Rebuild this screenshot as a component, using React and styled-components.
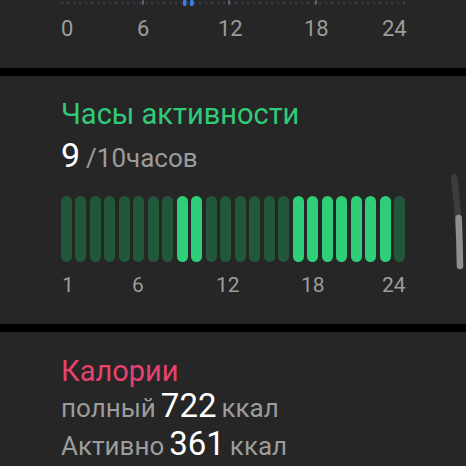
import styled, { createGlobalStyle } from 'styled-components';

const GlobalStyle = createGlobalStyle`
  *, *::before, *::after {
    box-sizing: border-box;
  }
  html, body {
    margin: 0;
    padding: 0;
    background: #000;
    width: 466px;
    height: 466px;
    overflow: hidden;
    font-family: Roboto, "Noto Sans", sans-serif;
  }
`;

const Screen = styled.div`
  position: relative;
  width: 466px;
  height: 466px;
  display: flex;
  flex-direction: column;
  gap: 8px;
  overflow: hidden;
`;

const Card = styled.section`
  flex: none;
  height: ${(p) => p.$height}px;
  background: #262626;
  padding: ${(p) => p.$top || 0}px 61px 0 61px;
  display: flex;
  flex-direction: column;
`;

const Strip = styled.svg`
  display: block;
  width: 344px;
  height: 6px;
`;

const Axis = styled.div`
  position: relative;
  width: 344px;
  height: ${(p) => p.$line}px;
  margin-top: ${(p) => p.$gap}px;
`;

const Tick = styled.span`
  position: absolute;
  top: 0;
  font-size: ${(p) => p.$size}px;
  line-height: ${(p) => p.$line}px;
  color: #9c9c9c;
`;

const Title = styled.h2`
  margin: 0;
  font-size: ${(p) => p.$size}px;
  font-weight: 400;
  line-height: 34px;
  color: ${(p) => p.$color};
`;

const ValueRow = styled.div`
  display: flex;
  align-items: baseline;
  gap: ${(p) => p.$gap || 6}px;
  margin-top: ${(p) => p.$mt || 0}px;
`;

const Big = styled.span`
  font-size: ${(p) => p.$size}px;
  line-height: ${(p) => p.$line}px;
  color: #fff;
`;

const Muted = styled.span`
  font-size: 26px;
  line-height: ${(p) => p.$line}px;
  color: #9c9c9c;
`;

const Bars = styled.div`
  display: grid;
  grid-template-columns: repeat(24, 1fr);
  gap: 3.8px;
  height: 66px;
  margin-top: 19px;
`;

const Bar = styled.div`
  border-radius: 6px;
  background: ${(p) => (p.$on ? '#2ecf78' : '#22573b')};
`;

const Scroll = styled.svg`
  position: absolute;
  left: 440px;
  top: 169px;
  width: 26px;
  height: 110px;
`;

const topTicks = [
  { t: '0', x: 0 },
  { t: '6', x: 76 },
  { t: '12', x: 157 },
  { t: '18', x: 243 },
  { t: '24', x: 321 },
];

const midTicks = [
  { t: '1', x: 1 },
  { t: '6', x: 71 },
  { t: '12', x: 155 },
  { t: '18', x: 240 },
  { t: '24', x: 321 },
];

const active = [8, 9, 16, 17, 18, 19, 20, 21, 22];

const DotStrip = () => {
  const dots = Array.from({ length: 58 }, (_, i) => i * 6 + 1);
  return (
    <Strip viewBox="0 0 344 6">
      {dots.map((x) => (
        <rect key={x} x={x - 1} y={1.5} width={2.4} height={3} rx={1} fill="#363b46" />
      ))}
      {[81, 167, 254].map((x) => (
        <rect key={'t' + x} x={x} y={0} width={2} height={5} rx={1} fill="#5c6270" />
      ))}
      <rect x={122} y={0} width={3.5} height={6} rx={1.2} fill="#3f7fe6" />
      <rect x={129} y={0} width={3.5} height={6} rx={1.2} fill="#3f7fe6" />
    </Strip>
  );
};

export default function App() {
  return (
    <>
      <GlobalStyle />
      <Screen>
        <Card $height={68}>
          <DotStrip />
          <Axis $gap={10} $line={26}>
            {topTicks.map((k) => (
              <Tick key={k.t} $size={22} $line={26} style={{ left: k.x }}>
                {k.t}
              </Tick>
            ))}
          </Axis>
        </Card>

        <Card $height={248} $top={21}>
          <Title $size={29} $color="#30cb79">Часы активности</Title>
          <ValueRow $mt={5}>
            <Big $size={34} $line={38}>9</Big>
            <Muted $line={38}>/10часов</Muted>
          </ValueRow>
          <Bars>
            {Array.from({ length: 24 }, (_, i) => (
              <Bar key={i} $on={active.includes(i)} />
            ))}
          </Bars>
          <Axis $gap={11} $line={25}>
            {midTicks.map((k) => (
              <Tick key={k.t} $size={21} $line={25} style={{ left: k.x }}>
                {k.t}
              </Tick>
            ))}
          </Axis>
        </Card>

        <Card $height={200} $top={22}>
          <Title $size={29} $color="#e8426f">Калории</Title>
          <ValueRow $gap={5}>
            <Muted $line={36}>полный</Muted>
            <Big $size={33} $line={36}>722</Big>
            <Muted $line={36}>ккал</Muted>
          </ValueRow>
          <ValueRow $gap={5}>
            <Muted $line={36}>Активно</Muted>
            <Big $size={33} $line={36}>361</Big>
            <Muted $line={36}>ккал</Muted>
          </ValueRow>
        </Card>

        <Scroll viewBox="0 0 26 110">
          <path d="M14 8 Q19 45 20 97" stroke="#3c3c3c" strokeWidth="6.5" fill="none" strokeLinecap="round" />
          <path d="M18.6 49 Q19.6 72 20 97" stroke="#8e8e8e" strokeWidth="6.5" fill="none" strokeLinecap="round" />
        </Scroll>
      </Screen>
    </>
  );
}
